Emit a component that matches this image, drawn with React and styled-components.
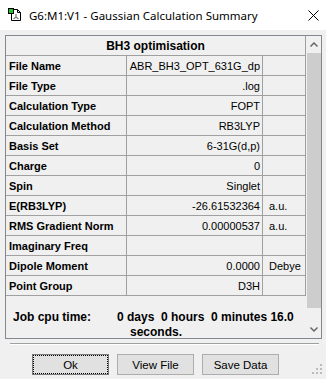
import React from 'react';
import styled, { createGlobalStyle } from 'styled-components';

const GlobalStyle = createGlobalStyle`
    html, body {
        margin: 0;
        padding: 0;
        background: #f0f0f0;
    }
    body {
        font-family: 'Liberation Sans', Arial, sans-serif;
        color: #000;
    }
`

const Window = styled.div`
    width: 326px;
    height: 379px;
    background: #f0f0f0;
    display: flex;
    flex-direction: column;
    position: relative;
    overflow: hidden;
`
const TitleBar = styled.div`
    height: 30px;
    background: #fff;
    display: flex;
    align-items: center;
    padding: 0 7px 0 8px;
    box-sizing: border-box;
`
const TitleText = styled.span`
    flex: 1;
    margin-left: 7px;
    font-family: 'Noto Sans', 'Open Sans', sans-serif;
    font-size: 11.5px;
    color: #000;
    white-space: nowrap;
`
const Body = styled.div`
    padding: 5px 4px 0 5px;
`
const Panel = styled.div`
    display: flex;
    height: 304px;
    border: 1px solid #828790;
    box-sizing: border-box;
    background: #f0f0f0;
`
const Sheet = styled.div`
    width: 300px;
    display: flex;
    flex-direction: column;
`
const Grid = styled.div`
    display: grid;
    grid-template-columns: 121px 136px 43px;
    grid-auto-rows: 20px;
`
const Cell = styled.div`
    box-sizing: border-box;
    border-right: 1px solid #a0a0a0;
    border-bottom: 1px solid #a0a0a0;
    display: flex;
    align-items: center;
    font-size: 11px;
    white-space: nowrap;
    overflow: hidden;
    padding: ${p => p.$pad || '0 3px'};
    justify-content: ${p => p.$align || 'flex-start'};
    font-weight: ${p => (p.$bold ? 'bold' : 'normal')};
`
const HeadCell = styled(Cell)`
    grid-column: 1 / 4;
    justify-content: center;
    font-weight: bold;
    font-size: 12px;
`
const JobTime = styled.div`
    padding-top: 14px;
    font-size: 12px;
    font-weight: bold;
    line-height: 15px;
`
const JobLine = styled.div`
    display: flex;
    padding-left: 7px;
    white-space: pre;
`
const JobLabel = styled.span`
    width: 104px;
`
const JobTail = styled.div`
    text-align: center;
`
const ScrollBar = styled.div`
    width: 16px;
    display: flex;
    flex-direction: column;
    background: #f0f0f0;
`
const ScrollArrow = styled.div`
    height: 17px;
    display: flex;
    align-items: center;
    justify-content: center;
`
const Thumb = styled.div`
    height: 255px;
    background: #cdcdcd;
    margin: 0 0 0 1px;
`
const Track = styled.div`
    flex: 1;
`
const Separator = styled.div`
    margin: 4px 3px 0 5px;
    border-top: 1px solid #a0a0a0;
    border-bottom: 1px solid #fff;
`
const ButtonRow = styled.div`
    display: flex;
    gap: 8px;
    padding: 9px 0 0 32px;
`
const Button = styled.button`
    width: 77px;
    height: 21px;
    box-sizing: border-box;
    background: #e1e1e1;
    border: 1px solid #adadad;
    font-family: 'Liberation Sans', Arial, sans-serif;
    font-size: 11.5px;
    color: #000;
    padding: 0;
    position: relative;
    ${p => p.$focused && `
        border: 1px solid #7a7a7a;
        outline: 1px dotted #000;
        outline-offset: -2px;
    `}
`
const Grip = styled.svg`
    position: absolute;
    right: 4px;
    bottom: 5px;
`

const rows = [
    ['File Name', 'ABR_BH3_OPT_631G_dp', ''],
    ['File Type', '.log', ''],
    ['Calculation Type', 'FOPT', ''],
    ['Calculation Method', 'RB3LYP', ''],
    ['Basis Set', '6-31G(d,p)', ''],
    ['Charge', '0', ''],
    ['Spin', 'Singlet', ''],
    ['E(RB3LYP)', '-26.61532364', 'a.u.'],
    ['RMS Gradient Norm', '0.00000537', 'a.u.'],
    ['Imaginary Freq', '', ''],
    ['Dipole Moment', '0.0000', 'Debye'],
    ['Point Group', 'D3H', ''],
];

function AppIcon() {
    return (
        <svg width="14" height="14" viewBox="0 0 14 14">
            <path d="M3.5 1.5h6l3 3v8h-9z" fill="#fff" stroke="#000" />
            <path d="M9.5 1.5v3h3" fill="none" stroke="#000" />
            <path d="M8 6v3M8 9l-2.5 2M8 9l2.5 2" stroke="#7a7a7a" strokeWidth="1.2" fill="none" />
            <rect x="0.5" y="0.5" width="5" height="5" fill="#22c02c" stroke="#000" />
        </svg>
    );
}

function Chevron({ down }) {
    return (
        <svg width="8" height="5" viewBox="0 0 8 5">
            <path d={down ? 'M0.5 0.5l3.5 3.5l3.5-3.5' : 'M0.5 4.5l3.5-3.5l3.5 3.5'} fill="none" stroke="#606060" strokeWidth="1.4" />
        </svg>
    );
}

export default function App() {
    return (
        <Window>
            <GlobalStyle />
            <TitleBar>
                <AppIcon />
                <TitleText>G6:M1:V1 - Gaussian Calculation Summary</TitleText>
                <svg width="11" height="11" viewBox="0 0 11 11">
                    <path d="M0.5 0.5l10 10M10.5 0.5l-10 10" stroke="#000" strokeWidth="1" />
                </svg>
            </TitleBar>
            <Body>
                <Panel>
                    <Sheet>
                        <Grid>
                            <HeadCell>BH3 optimisation</HeadCell>
                            {rows.map(([label, value, unit]) => (
                                <React.Fragment key={label}>
                                    <Cell $bold>{label}</Cell>
                                    <Cell $align="flex-end" $pad="0 2px 0 0">{value}</Cell>
                                    <Cell $pad="0 0 0 6px">{unit}</Cell>
                                </React.Fragment>
                            ))}
                        </Grid>
                        <JobTime>
                            <JobLine>
                                <JobLabel>Job cpu time:</JobLabel>
                                <span>0 days  0 hours  0 minutes 16.0</span>
                            </JobLine>
                            <JobTail>seconds.</JobTail>
                        </JobTime>
                    </Sheet>
                    <ScrollBar>
                        <ScrollArrow><Chevron /></ScrollArrow>
                        <Thumb />
                        <Track />
                        <ScrollArrow><Chevron down /></ScrollArrow>
                    </ScrollBar>
                </Panel>
                <Separator />
            </Body>
            <ButtonRow>
                <Button $focused>Ok</Button>
                <Button>View File</Button>
                <Button>Save Data</Button>
            </ButtonRow>
            <Grip width="10" height="10" viewBox="0 0 10 10">
                <g fill="#bcbcbc">
                    <rect x="8" y="0" width="2" height="2" />
                    <rect x="4" y="4" width="2" height="2" />
                    <rect x="8" y="4" width="2" height="2" />
                    <rect x="0" y="8" width="2" height="2" />
                    <rect x="4" y="8" width="2" height="2" />
                    <rect x="8" y="8" width="2" height="2" />
                </g>
            </Grip>
        </Window>
    );
}
